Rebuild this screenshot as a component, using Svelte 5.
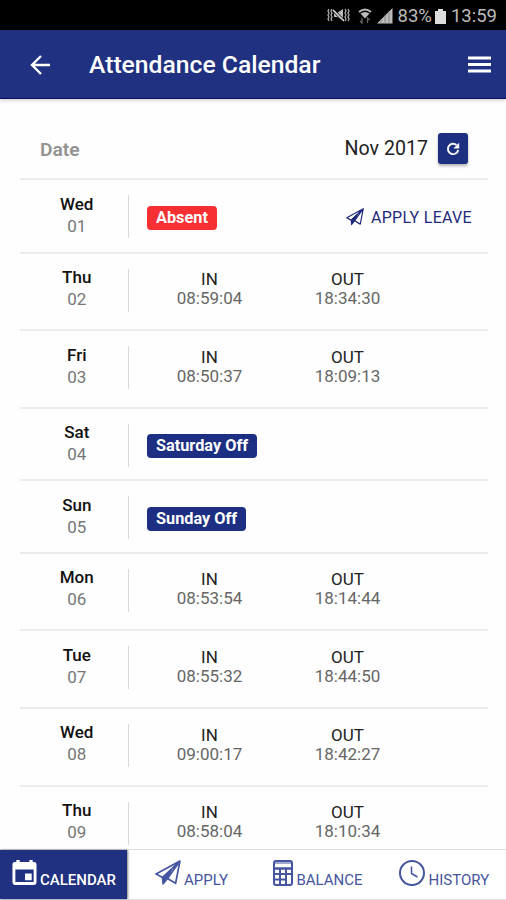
<script>
  const days = [
    { day: 'Wed', date: '01', badge: 'Absent', absent: true },
    { day: 'Thu', date: '02', in: '08:59:04', out: '18:34:30' },
    { day: 'Fri', date: '03', in: '08:50:37', out: '18:09:13' },
    { day: 'Sat', date: '04', badge: 'Saturday Off' },
    { day: 'Sun', date: '05', badge: 'Sunday Off' },
    { day: 'Mon', date: '06', in: '08:53:54', out: '18:14:44' },
    { day: 'Tue', date: '07', in: '08:55:32', out: '18:44:50' },
    { day: 'Wed', date: '08', in: '09:00:17', out: '18:42:27' },
    { day: 'Thu', date: '09', in: '08:58:04', out: '18:10:34' }
  ];

  const tabs = ['calendar', 'apply', 'balance', 'history'];

  let active = $state('calendar');
</script>

{#snippet plane(size)}
  <svg width={size} height={size} viewBox="0 0 24 24" fill="none" stroke="currentColor" stroke-width="1.6" stroke-linejoin="round">
    <path d="M23 1 1 13l6 3.200L23 1l-4 20.500-7.500-4.500L23 1" />
    <path d="M7 16.200 15 9l-3.500 8L7.500 22z" fill="currentColor" />
  </svg>
{/snippet}

<div class="screen">
  <div class="status">
    <svg class="mute" width="23" height="16" viewBox="0 0 23 16" fill="none" stroke="#aaa" stroke-width="1.3">
      <path d="M2 1l-1 2 1 2-1 2 1 2-1 2 1 2M5 1L4 3l1 2-1 2 1 2-1 2 1 2M18 1l1 2-1 2 1 2-1 2 1 2-1 2M21 1l1 2-1 2 1 2-1 2 1 2-1 2" />
      <path d="M7 5h3l6-4v12l-6-4H7z" fill="#bbb" stroke="none" />
      <path d="M6 2l11 11" stroke="#000" stroke-width="3" />
      <path d="M6 2l11 11" stroke="#ddd" stroke-width="1.6" />
    </svg>
    <svg class="wifi" width="14" height="16" viewBox="0 0 14 16">
      <path d="M1 4Q7-1 13 4" fill="none" stroke="#bbb" stroke-width="2" />
      <path d="M2.500 5.500q4.500-3 9 0L7 10.500z" fill="#bbb" />
      <path d="M4 10v5l-2-2M9.500 15v-5l2 2" fill="none" stroke="#666" stroke-width="1.300" />
    </svg>
    <svg class="signal" width="16" height="16" viewBox="0 0 16 16">
      <path d="M0 15.500 15.500 0v15.500z" fill="#bbb" />
      <path d="M4 11v5M8 7v9M12 3v13" stroke="#777" stroke-width=".7" />
    </svg>
    <span class="percent">83%</span>
    <svg class="battery" width="11" height="15" viewBox="0 0 11 15" fill="#ddd">
      <path d="M3 0h5v2h3v13H0V2h3z" />
    </svg>
    <span>13:59</span>
  </div>

  <header>
    <button class="back" aria-label="Back">
      <svg width="20" height="20" viewBox="0 0 20 20" fill="none" stroke="currentColor" stroke-width="2.4">
        <path d="M20 10H2M11 1 2 10l9 9" />
      </svg>
    </button>
    <h1>Attendance Calendar</h1>
    <button class="menu" aria-label="Menu">
      <svg width="23" height="17" viewBox="0 0 23 17" stroke="currentColor" stroke-width="3">
        <path d="M0 2h23M0 8.500h23M0 15h23" />
      </svg>
    </button>
  </header>

  <main>
    <div class="month">
      <span class="label">Date</span>
      <span class="value">Nov 2017</span>
      <button class="refresh" aria-label="Refresh">
        <svg width="14" height="14" viewBox="0 0 14 14" fill="none" stroke="currentColor" stroke-width="1.900">
          <path d="M10.500 3A5.200 5.200 0 1 0 12.200 8" />
          <path d="M13.200.8v5.800H7.400z" fill="currentColor" stroke="none" />
        </svg>
      </button>
    </div>

    {#each days as row}
      <div class="row" class:short={row.badge}>
        <div class="day">
          <b>{row.day}</b>
          <span>{row.date}</span>
        </div>
        {#if row.badge}
          <span class="badge" class:absent={row.absent}>{row.badge}</span>
          {#if row.absent}
            <button class="leave">{@render plane(18)}<span>APPLY LEAVE</span></button>
          {/if}
        {:else}
          <div class="time">IN<span>{row.in}</span></div>
          <div class="time">OUT<span>{row.out}</span></div>
        {/if}
      </div>
    {/each}
  </main>

  <nav>
    {#each tabs as tab}
      <button class="tab {tab}" class:active={active === tab} onclick={() => (active = tab)}>
        {#if tab === 'calendar'}
          <svg width="25" height="25" viewBox="0 0 25 26">
            <path fill="currentColor" fill-rule="evenodd" d="M4 0h3.500v2h10V0H21v2h1.500Q25 2 25 4.500v19q0 2.500-2.500 2.500h-20Q0 26 0 23.500v-19Q0 2 2.500 2H4zM3 10v13h19V10zM13 14h7v7h-7z" />
          </svg>
        {:else if tab === 'apply'}
          {@render plane(26)}
        {:else if tab === 'balance'}
          <svg width="20" height="26" viewBox="0 0 20 26" fill="none" stroke="currentColor" stroke-width="2">
            <rect x="1" y="1" width="18" height="24" rx="2" />
            <path d="M2 8.500h16" stroke-width="2.500" />
            <path d="M2 3h16" stroke-width="1" />
            <path d="M2 14h16M2 19.500h11M7 9v16M13 9v16" stroke-width="2" />
          </svg>
        {:else}
          <svg width="26" height="26" viewBox="0 0 26 26" fill="none" stroke="currentColor" stroke-width="2">
            <circle cx="13" cy="13" r="12" />
            <path d="M12.500 6.500v7l6 3.500" stroke-width="1.500" />
          </svg>
        {/if}
        <span>{tab.toUpperCase()}</span>
      </button>
    {/each}
  </nav>
</div>

<style>
  :global(body) {
    margin: 0;
    background: #fefefe;
  }

  .screen {
    display: flex;
    flex-direction: column;
    height: 900px;
    overflow: hidden;
    font-family: Roboto, sans-serif;
    color: #222;
  }

  button {
    display: flex;
    align-items: center;
    padding: 0;
    border: 0;
    background: none;
    color: inherit;
    font: inherit;
    cursor: pointer;
  }

  svg {
    display: block;
    flex: none;
  }

  .status {
    display: flex;
    align-items: center;
    flex: none;
    height: 30px;
    padding: 2px 9px 0 0;
    box-sizing: border-box;
    justify-content: flex-end;
    background: #000;
    color: #bbb;
    font-size: 18.5px;
  }

  .mute {
    margin-right: 8px;
  }

  .wifi {
    margin-right: 5px;
  }

  .signal {
    margin-right: 5px;
  }

  .battery {
    margin: 0 5px 0 3px;
  }

  header {
    display: flex;
    align-items: center;
    flex: none;
    height: 69px;
    padding: 1px 15px 0 30px;
    box-sizing: border-box;
    background: #1f3180;
    border-bottom: 1px solid #0b0b66;
    box-shadow: 0 2px 3px rgba(0, 0, 0, 0.15);
    color: #fff;
  }

  h1 {
    flex: 1;
    margin: 0 0 0 39px;
    font-size: 24.7px;
    font-weight: 500;
  }

  main {
    flex: 1;
    min-height: 0;
    padding: 19px 18px 0 20px;
    overflow: hidden;
  }

  .month {
    display: flex;
    align-items: center;
    height: 62px;
    padding: 1px 20px 0;
    border-bottom: 2px solid #ececec;
    box-sizing: border-box;
  }

  .label {
    flex: 1;
    padding-top: 1px;
    color: #929292;
    font-size: 19.2px;
    font-weight: 600;
  }

  .value {
    margin: -1px 10px 0 0;
    font-size: 19.6px;
  }

  .refresh {
    justify-content: center;
    width: 30px;
    height: 31px;
    border-radius: 3px;
    background: #1d2f80;
    box-shadow: 0 2px 3px rgba(0, 0, 0, 0.3);
    color: #fff;
  }

  .row {
    display: flex;
    height: 77.6px;
    border-bottom: 2px solid #ececec;
    box-sizing: border-box;
  }

  .row.short {
    height: 72.4px;
  }

  .month + .row {
    height: 73.8px;
  }

  .day {
    display: flex;
    flex-direction: column;
    width: 108.5px;
    height: 43px;
    margin-top: 15px;
    box-sizing: border-box;
    border-right: 1px solid #d8d8d8;
    text-align: center;
    font-size: 17px;
    line-height: 22px;
  }

  .day b {
    margin-top: -2.5px;
    padding-left: 6px;
    font-weight: 500;
    color: #111;
  }

  .day span {
    padding-left: 6px;
    color: #777;
  }

  .time {
    display: flex;
    flex-direction: column;
    width: 138px;
    margin-top: 16.7px;
    text-align: center;
    font-size: 17px;
    line-height: 19px;
  }

  .day + .time {
    margin-left: 12px;
  }

  .time span {
    color: #666;
  }

  .badge {
    height: 24px;
    margin: 25.5px 0 0 18.5px;
    padding: 0 9px;
    border-radius: 4px;
    background: #1d2f82;
    color: #fff;
    font-size: 16.3px;
    font-weight: 700;
    line-height: 23px;
  }

  .badge.absent {
    background: #f72f33;
  }

  .leave {
    gap: 7px;
    height: 24px;
    margin: 25px 16px 0 auto;
    color: #1f2a7c;
    font-size: 16px;
    letter-spacing: 0.3px;
  }

  nav {
    display: flex;
    flex: none;
    height: 51px;
    box-sizing: border-box;
    border-top: 1px solid #ddd;
    border-bottom: 1px solid #ddd;
    background: #fff;
  }

  .tab {
    width: 25%;
    box-sizing: border-box;
    align-items: flex-start;
    justify-content: center;
    padding: 10px 0 0 3px;
    color: #4555a0;
    font-size: 15px;
  }

  .tab span {
    margin: 11px 0 0 3px;
    line-height: 19px;
  }

  .tab.active {
    width: 127px;
    padding-left: 1px;
    background: #1f3180;
    box-shadow: 1px 0 2px rgba(0, 0, 0, 0.5);
    color: #fff;
    font-weight: 500;
  }
</style>
